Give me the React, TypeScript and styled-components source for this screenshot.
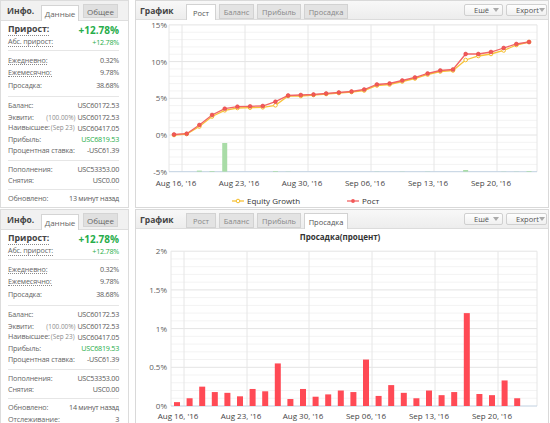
import React from "react";
import styled, { createGlobalStyle } from "styled-components";

const GlobalStyle = createGlobalStyle`
  body {
    margin: 0;
    background: #fff;
    font-family: "Open Sans", "Liberation Sans", sans-serif;
  }
`;

const Page = styled.div`
  width: 550px;
  height: 423px;
  overflow: hidden;
  display: flex;
  flex-direction: column;
  gap: 1px;
`;

const Widget = styled.div<{ $h: number }>`
  display: flex;
  gap: 6px;
  height: ${(p) => p.$h}px;
  flex-shrink: 0;
`;

/* ---------- info panel ---------- */

const InfoPanel = styled.div`
  width: 129px;
  flex-shrink: 0;
  box-sizing: border-box;
  border: 1px solid #dcdcdc;
  display: flex;
  flex-direction: column;
  background: #fff;
`;

const InfoHeader = styled.div`
  height: 20px;
  box-sizing: border-box;
  display: flex;
  align-items: flex-end;
  gap: 4px;
  padding: 0 0 0 6px;
  background: #f1f1f1;
  border-bottom: 1px solid #dedede;
`;

const InfoTitle = styled.div`
  font-size: 8.5px;
  font-weight: 700;
  color: #444;
  align-self: center;
  width: 30px;
`;

const InfoTab = styled.div<{ $active?: boolean }>`
  height: ${(p) => (p.$active ? 16 : 14)}px;
  margin-bottom: ${(p) => (p.$active ? -1 : 2)}px;
  width: ${(p) => (p.$active ? 38 : 35)}px;
  box-sizing: border-box;
  display: flex;
  align-items: center;
  justify-content: center;
  font-size: 8px;
  color: #666;
  background: ${(p) => (p.$active ? "#fff" : "#e0e0e0")};
  border: 1px solid #d4d4d4;
  border-bottom: ${(p) => (p.$active ? "none" : "1px solid #d4d4d4")};
`;

const InfoSection = styled.div<{ $pad: string; $first?: boolean }>`
  margin: 0 9px 0 7px;
  padding: ${(p) => p.$pad};
  border-top: ${(p) => (p.$first ? "none" : "1px solid #e6e6e6")};
  display: flex;
  flex-direction: column;
`;

const InfoRow = styled.div<{ $h: number }>`
  height: ${(p) => p.$h}px;
  display: flex;
  align-items: center;
  justify-content: space-between;
  font-size: 7px;
  white-space: nowrap;
`;

const Label = styled.span<{ $dotted?: boolean; $strong?: boolean }>`
  color: ${(p) => (p.$strong ? "#444" : "#666")};
  font-size: ${(p) => (p.$strong ? 8.8 : 7.2)}px;
  font-weight: ${(p) => (p.$strong ? 700 : 400)};
  letter-spacing: ${(p) => (p.$strong ? 0 : -0.15)}px;
  line-height: 1.15;
  border-bottom: ${(p) => (p.$dotted ? "1px dotted #8a8a8a" : "none")};
`;

const Value = styled.span<{ $tone?: "green" | "big" }>`
  color: ${(p) => (p.$tone ? "#27ad4a" : "#5a5a5a")};
  font-size: ${(p) => (p.$tone === "big" ? 10 : 7.2)}px;
  font-weight: ${(p) => (p.$tone === "big" ? 700 : 400)};
  letter-spacing: ${(p) => (p.$tone === "big" ? 0 : -0.25)}px;
`;

const Note = styled.span`
  color: #8c8c8c;
  font-size: 6.4px;
  margin: 0 2px 0 1px;
`;

type InfoProps = { updated: string; extra?: boolean };

function Info({ updated, extra }: InfoProps) {
  return (
    <InfoPanel>
      <InfoHeader>
        <InfoTitle>Инфо.</InfoTitle>
        <InfoTab $active>Данные</InfoTab>
        <InfoTab>Общее</InfoTab>
      </InfoHeader>
      <InfoSection $first $pad="3px 0 2px">
        <InfoRow $h={12}>
          <Label $strong $dotted>
            Прирост:
          </Label>
          <Value $tone="big">+12.78%</Value>
        </InfoRow>
        <InfoRow $h={12}>
          <Label $dotted>Абс. прирост:</Label>
          <Value $tone="green">+12.78%</Value>
        </InfoRow>
      </InfoSection>
      <InfoSection $pad="3px 0 5px">
        <InfoRow $h={12.3}>
          <Label $dotted>Ежедневно:</Label>
          <Value>0.32%</Value>
        </InfoRow>
        <InfoRow $h={12.3}>
          <Label $dotted>Ежемесячно:</Label>
          <Value>9.78%</Value>
        </InfoRow>
        <InfoRow $h={12.3}>
          <Label>Просадка:</Label>
          <Value>38.68%</Value>
        </InfoRow>
      </InfoSection>
      <InfoSection $pad="3px 0 4px">
        <InfoRow $h={11.2}>
          <Label>Баланс:</Label>
          <Value>USC60172.53</Value>
        </InfoRow>
        <InfoRow $h={11.2}>
          <Label>Эквити:</Label>
          <span>
            <Note>(100.00%)</Note>
            <Value>USC60172.53</Value>
          </span>
        </InfoRow>
        <InfoRow $h={11.2}>
          <span>
            <Label>Наивысшее:</Label>
            <Note>(Sep 23)</Note>
          </span>
          <Value>USC60417.05</Value>
        </InfoRow>
        <InfoRow $h={11.2}>
          <Label>Прибыль:</Label>
          <Value $tone="green">USC6819.53</Value>
        </InfoRow>
        <InfoRow $h={11.2}>
          <Label>Процентная ставка:</Label>
          <Value>-USC61.39</Value>
        </InfoRow>
      </InfoSection>
      <InfoSection $pad="3px 0 3px">
        <InfoRow $h={11}>
          <Label>Пополнения:</Label>
          <Value>USC53353.00</Value>
        </InfoRow>
        <InfoRow $h={11}>
          <Label>Снятия:</Label>
          <Value>USC0.00</Value>
        </InfoRow>
      </InfoSection>
      <InfoSection $pad="3px 0 3px">
        <InfoRow $h={11}>
          <Label>Обновлено:</Label>
          <Value>{updated}</Value>
        </InfoRow>
        {extra && (
          <InfoRow $h={13}>
            <Label>Отслеживание:</Label>
            <Value>3</Value>
          </InfoRow>
        )}
      </InfoSection>
    </InfoPanel>
  );
}

/* ---------- chart panel ---------- */

const ChartPanel = styled.div`
  width: 414px;
  flex-shrink: 0;
  box-sizing: border-box;
  border: 1px solid #d9d9d9;
  display: flex;
  flex-direction: column;
  overflow: hidden;
`;

const ChartHeader = styled.div`
  height: 19px;
  flex-shrink: 0;
  box-sizing: border-box;
  display: flex;
  align-items: flex-end;
  gap: 3px;
  padding: 0 1px 0 4px;
  background: linear-gradient(#f8f8f8, #ededed);
  border-bottom: 1px solid #dcdcdc;
`;

const ChartTitle = styled.div`
  font-size: 8.5px;
  font-weight: 700;
  color: #444;
  align-self: center;
  width: 43px;
`;

const ChartTab = styled.div<{ $w: number; $active?: boolean }>`
  width: ${(p) => p.$w}px;
  height: ${(p) => (p.$active ? 16 : 15)}px;
  margin-bottom: ${(p) => (p.$active ? -1 : 0)}px;
  box-sizing: border-box;
  display: flex;
  align-items: center;
  justify-content: center;
  font-size: 7.5px;
  color: ${(p) => (p.$active ? "#555" : "#888")};
  background: ${(p) => (p.$active ? "#fff" : "#e3e3e3")};
  border: 1px solid #d2d2d2;
  border-bottom: ${(p) => (p.$active ? "none" : "1px solid #d2d2d2")};
`;

const Spacer = styled.div`
  flex: 1;
`;

const MenuButton = styled.div<{ $w: number }>`
  width: ${(p) => p.$w}px;
  height: 12px;
  align-self: flex-start;
  margin-top: 3px;
  box-sizing: border-box;
  display: flex;
  align-items: center;
  justify-content: space-between;
  padding: 0 3px 0 9px;
  font-size: 7.5px;
  color: #555;
  background: linear-gradient(#fefefe, #f0f0f0);
  border: 1px solid #d0d0d0;
  border-radius: 2px;
`;

const Caret = styled.span`
  width: 0;
  height: 0;
  border-left: 3px solid transparent;
  border-right: 3px solid transparent;
  border-top: 4px solid #aaa;
`;

const ChartBody = styled.div`
  flex: 1;
  display: flex;
  background: #fff;
`;

const TABS: [string, number][] = [
  ["Рост", 30],
  ["Баланс", 35],
  ["Прибыль", 44],
  ["Просадка", 44],
];

const DATES = ["Aug 16, '16", "Aug 23, '16", "Aug 30, '16", "Sep 06, '16", "Sep 13, '16", "Sep 20, '16"];

const txt = {
  fontFamily: '"Open Sans", "Liberation Sans", sans-serif',
  fontSize: 8,
  fill: "#606060",
};

// growth chart
const GX = (i: number) => 174 + 12.68 * i;
const RED = [134.5, 133.7, 125, 115, 108.7, 106.7, 106.3, 106, 101.7, 95.5, 95, 94.5, 93.5, 92.5, 91.5, 89.5, 84.5, 83.5, 80.5, 77.5, 73.5, 70.5, 69.5, 54, 54, 52, 48, 44, 42];
const YEL = [135, 134, 126.5, 116.5, 110.3, 108, 107.7, 107.3, 105.3, 96, 96, 95, 94, 93, 92, 90.5, 85.5, 84.5, 81.5, 78.5, 74.5, 71.5, 70.5, 60, 56, 54, 50.5, 45, 42];
const GREEN: [number, number][] = [
  [2, 170.6], [3, 171], [4, 143], [8, 171], [9, 171.5], [16, 171.5],
  [18, 171.5], [20, 171.5], [23, 170], [26, 171.5], [27, 171.5], [28, 171],
];

function GrowthChart() {
  const gy = (v: number) => 135 - v * 7.34;
  const minors = [];
  for (let v = -4; v < 15; v++) if (v % 5 !== 0) minors.push(v);
  const grids = [182, 245, 308, 371, 434, 497];
  return (
    <svg width="412" height="187" viewBox="136 20 412 187">
      {minors.map((v) => (
        <line key={v} x1={169} x2={537} y1={gy(v)} y2={gy(v)} stroke="#f3f3f3" />
      ))}
      {[15, 10, 5, 0].map((v) => (
        <line key={v} x1={169} x2={537} y1={gy(v)} y2={gy(v)} stroke="#e4e4e4" />
      ))}
      {[169, ...grids, 537].map((x) => (
        <line key={x} x1={x} x2={x} y1={gy(15)} y2={gy(-5)} stroke="#e6e6e6" />
      ))}
      <line x1={169} x2={537} y1={gy(-5)} y2={gy(-5)} stroke="#c0d0e0" />
      {[15, 10, 5, 0, -5].map((v) => (
        <text key={v} x={167} y={gy(v) + 3} textAnchor="end" style={txt}>
          {v}%
        </text>
      ))}
      {GREEN.map(([i, top]) => (
        <rect key={i} x={GX(i) - 2.5} y={top} width={5} height={gy(-5) - top} fill="#a9dca7" />
      ))}
      <polyline points={YEL.map((y, i) => `${GX(i)},${y}`).join(" ")} fill="none" stroke="#f7c23a" strokeWidth={1.3} />
      <polyline points={RED.map((y, i) => `${GX(i)},${y}`).join(" ")} fill="none" stroke="#f26464" strokeWidth={1.3} />
      {YEL.map((y, i) => (
        <circle key={"y" + i} cx={GX(i)} cy={y} r={1.8} fill="#fff" stroke="#f5bd2a" strokeWidth={1} />
      ))}
      {RED.map((y, i) => (
        <circle key={"r" + i} cx={GX(i)} cy={y} r={1.9} fill="#f25858" stroke="#e04848" strokeWidth={0.6} />
      ))}
      {grids.map((x, i) => (
        <text key={x} x={x - 6} y={186} textAnchor="middle" style={{ ...txt, fill: "#444" }}>
          {DATES[i]}
        </text>
      ))}
      <line x1={232} x2={244} y1={201} y2={201} stroke="#f7c23a" strokeWidth={1.3} />
      <circle cx={238} cy={201} r={1.8} fill="#fff" stroke="#f5bd2a" />
      <text x={247} y={204} style={{ ...txt, fill: "#333" }}>
        Equity Growth
      </text>
      <line x1={347} x2={359} y1={201} y2={201} stroke="#f26464" strokeWidth={1.3} />
      <circle cx={353} cy={201} r={1.9} fill="#f25858" />
      <text x={362} y={204} style={{ ...txt, fill: "#333" }}>
        Рост
      </text>
    </svg>
  );
}

// drawdown chart
const DD = [0.05, 0.1, 0.25, 0.18, 0.17, 0.125, 0.22, 0.19, 0.55, 0.09, 0.22, 0.12, 0.15, 0.2, 0.18, 0.6, 0.13, 0.27, 0.17, 0.1, 0.2, 0.14, 0.18, 1.2, 0.155, 0.14, 0.33, 0.1];

function DrawdownChart() {
  const dy = (v: number) => 197 - v * 77.4;
  const minors = [];
  for (let k = 1; k < 20; k++) if (k % 5 !== 0) minors.push(k / 10);
  const grids = [184, 247, 309, 372, 435, 498];
  return (
    <svg width="412" height="210" viewBox="136 20 412 210">
      <text x={340} y={31} textAnchor="middle" style={{ ...txt, fontWeight: 700, fill: "#333" }}>
        Просадка(процент)
      </text>
      {minors.map((v) => (
        <line key={v} x1={171} x2={537} y1={dy(v)} y2={dy(v)} stroke="#f3f3f3" />
      ))}
      {[2, 1.5, 1, 0.5].map((v) => (
        <line key={v} x1={171} x2={537} y1={dy(v)} y2={dy(v)} stroke="#e4e4e4" />
      ))}
      {[171, ...grids, 537].map((x) => (
        <line key={x} x1={x} x2={x} y1={dy(2)} y2={dy(0)} stroke="#e6e6e6" />
      ))}
      <line x1={171} x2={537} y1={dy(0)} y2={dy(0)} stroke="#c0d0e0" />
      {[2, 1.5, 1, 0.5, 0].map((v) => (
        <text key={v} x={167} y={dy(v) + 3} textAnchor="end" style={txt}>
          {v}%
        </text>
      ))}
      {DD.map((v, i) => (
        <rect key={i} x={177 + 12.6 * i - 3} y={dy(v)} width={6} height={v * 77.4} fill="#ff4a55" />
      ))}
      {grids.map((x, i) => (
        <text key={x} x={x - 6} y={210} textAnchor="middle" style={{ ...txt, fill: "#444" }}>
          {DATES[i]}
        </text>
      ))}
    </svg>
  );
}

type ChartProps = { active: string; children: React.ReactNode };

function Chart({ active, children }: ChartProps) {
  return (
    <ChartPanel>
      <ChartHeader>
        <ChartTitle>График</ChartTitle>
        {TABS.map(([name, w]) => (
          <ChartTab key={name} $w={w} $active={name === active}>
            {name}
          </ChartTab>
        ))}
        <Spacer />
        <MenuButton $w={39}>
          Ешё
          <Caret />
        </MenuButton>
        <MenuButton $w={41}>
          Export
          <Caret />
        </MenuButton>
      </ChartHeader>
      <ChartBody>{children}</ChartBody>
    </ChartPanel>
  );
}

export default function App() {
  return (
    <>
      <GlobalStyle />
      <Page>
        <Widget $h={208}>
          <Info updated="13 минут назад" />
          <Chart active="Рост">
            <GrowthChart />
          </Chart>
        </Widget>
        <Widget $h={240}>
          <Info updated="14 минут назад" extra />
          <Chart active="Просадка">
            <DrawdownChart />
          </Chart>
        </Widget>
      </Page>
    </>
  );
}
